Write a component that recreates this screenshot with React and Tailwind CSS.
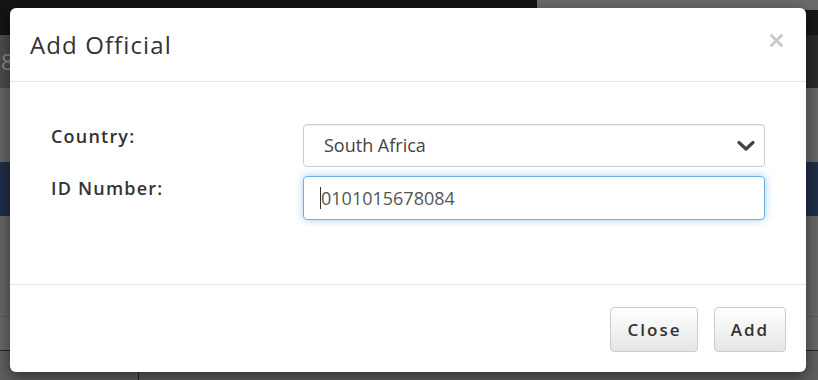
import React from "react";

function ChevronDown() {
  return (
    <svg width="20" height="14" viewBox="0 0 20 14" className="block">
      <path d="M3 3.5 L10 10 L17 3.5" fill="none" stroke="#444" strokeWidth="3.2" strokeLinecap="round" strokeLinejoin="round" />
    </svg>
  );
}

function CloseX() {
  return (
    <svg width="13" height="13" viewBox="0 0 13 13" className="block">
      <path d="M1.5 1.5 L11.5 11.5 M11.5 1.5 L1.5 11.5" stroke="#c9c9c9" strokeWidth="2.8" strokeLinecap="round" />
    </svg>
  );
}

export default function App() {
  const font = { fontFamily: "'Open Sans', 'Noto Sans', sans-serif" };

  return (
    <div className="relative w-[818px] h-[380px] overflow-hidden bg-[#656565]" style={font}>
      {/* page behind the backdrop */}
      <div className="flex flex-col h-full">
        <div className="flex h-[35px]">
          <div className="w-[537px] bg-[#141414]" />
          <div className="flex-1 flex flex-col">
            <div className="h-[10px] bg-[#6a6a6a]" />
            <div className="flex-1 bg-[#171717]" />
          </div>
        </div>
        <div className="flex h-[53px]">
          <div className="flex-1 bg-[#4c4c4c] text-[#8a8a8a] text-[22px] leading-[53px] pl-[1px]">8</div>
          <div className="w-[40px] bg-[#2a2a2a]" />
        </div>
        <div className="h-[74px] bg-[#676767]" />
        <div className="h-[54px] bg-[#1f2f48]" />
        <div className="h-[101px] bg-[#666666] border-b border-[#5a5a5a]" />
        <div className="h-[34px] bg-[#686868] border-b border-[#262626]" />
        <div className="flex-1 flex bg-[#5f5f5f]">
          <div className="w-[139px] border-r border-[#262626]" />
        </div>
      </div>

      {/* modal */}
      <div className="absolute left-[10px] top-[8px] w-[796px] h-[364px] bg-white rounded-[6px] shadow-[0_5px_15px_rgba(0,0,0,0.5)] flex flex-col">
        <div className="h-[74px] border-b border-[#e5e5e5] flex items-center justify-between pl-[20px] pr-[23px]">
          <h4 className="text-[24px] tracking-[1.1px] text-[#333] font-normal leading-none mt-[1px]">Add Official</h4>
          <div className="-mt-[8px]">
            <CloseX />
          </div>
        </div>

        <div className="flex-1 px-[41px] pt-[42px]">
          <div className="flex items-start">
            <div className="w-[252px] text-[18px] leading-[20px] font-semibold tracking-[1.2px] text-[#333] pt-[2px]">Country:</div>
            <div className="flex-1 h-[43px] border border-[#cccccc] rounded-[4px] flex items-center justify-between pl-[20px] pr-[8px] shadow-[inset_0_1px_1px_rgba(0,0,0,0.05)]">
              <span className="text-[18px] text-[#444]">South Africa</span>
              <ChevronDown />
            </div>
          </div>
          <div className="flex items-start mt-[9px]">
            <div className="w-[252px] text-[18px] leading-[20px] font-semibold tracking-[1.2px] text-[#333] pt-[2px]">ID Number:</div>
            <div className="flex-1 h-[44px] border border-[#66afe9] rounded-[4px] flex items-center pl-[16px] shadow-[0_0_8px_rgba(102,175,233,0.6)]">
              <span className="w-[1px] h-[22px] bg-[#333]" />
              <span className="text-[18px] text-[#555]">0101015678084</span>
            </div>
          </div>
        </div>

        <div className="h-[88px] border-t border-[#e5e5e5] flex justify-end items-start gap-[16px] pt-[22px] pr-[20px]">
          <button className="w-[88px] h-[45px] rounded-[4px] border border-[#cccccc] bg-gradient-to-b from-white to-[#e6e6e6] text-[17px] font-semibold tracking-[2px] pl-[1px] text-[#333]">
            Close
          </button>
          <button className="w-[72px] h-[45px] rounded-[4px] border border-[#cccccc] bg-gradient-to-b from-white to-[#e6e6e6] text-[17px] font-semibold tracking-[2px] text-[#333]">
            Add
          </button>
        </div>
      </div>
    </div>
  );
}
